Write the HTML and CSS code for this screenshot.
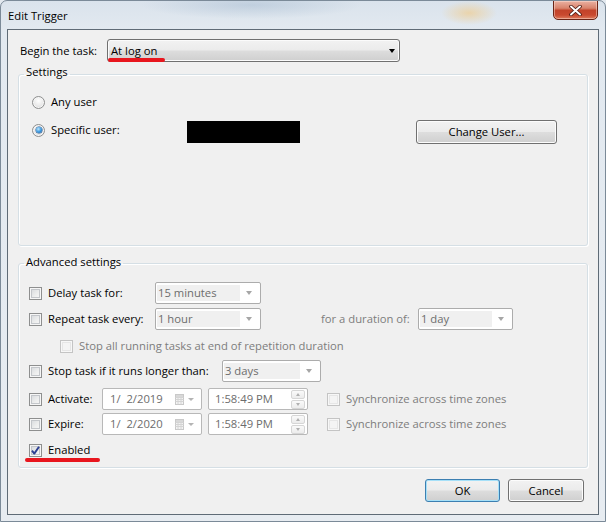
FILE: index.html
```html
<!DOCTYPE html>
<html>
<head>
<meta charset="utf-8">
<title>Edit Trigger</title>
<link rel="stylesheet" href="styles.css">
</head>
<body>
<div class="window">
  <div class="titlebar">
    <span class="title">Edit Trigger</span>
    <button class="close" aria-label="Close">
      <svg width="13" height="11" viewBox="0 0 13 11"><path d="M2 1.5 L11 9.5 M11 1.5 L2 9.5" stroke="#4a1a12" stroke-width="3.6" stroke-linecap="round" fill="none"/><path d="M2 1.5 L11 9.5 M11 1.5 L2 9.5" stroke="#ffffff" stroke-width="1.9" stroke-linecap="round" fill="none"/></svg>
    </button>
  </div>
  <div class="client">
    <div class="begin">
      <span class="begin-label">Begin the task:</span>
      <div class="combo">
        <span class="combo-val">At log on</span>
        <span class="combo-arrow"></span>
        <span class="mark mark-logon"></span>
      </div>
    </div>

    <fieldset class="group group-settings">
      <legend>Settings</legend>
      <div class="set-body">
        <div class="rrow rrow-any">
          <span class="radio"></span>
          <span class="rlabel">Any user</span>
        </div>
        <div class="rrow rrow-spec">
          <span class="radio checked"></span>
          <span class="rlabel spec-label">Specific user:</span>
          <span class="redacted"></span>
          <button class="btn btn-change">Change User...</button>
        </div>
      </div>
    </fieldset>

    <fieldset class="group group-adv">
      <legend>Advanced settings</legend>
      <div class="adv-body">
        <div class="arow r1">
          <span class="cb"></span>
          <span class="lbl w107">Delay task for:</span>
          <div class="dcombo w106"><span class="dval">15 minutes</span><span class="darr"></span></div>
        </div>
        <div class="arow r2">
          <span class="cb"></span>
          <span class="lbl w107">Repeat task every:</span>
          <div class="dcombo w106"><span class="dval">1 hour</span><span class="darr"></span></div>
          <span class="lbl dis dur">for a duration of:</span>
          <div class="dcombo w95"><span class="dval">1 day</span><span class="darr"></span></div>
        </div>
        <div class="arow r3">
          <span class="cb cb-dis indent"></span>
          <span class="lbl dis">Stop all running tasks at end of repetition duration</span>
        </div>
        <div class="arow r4">
          <span class="cb"></span>
          <span class="lbl w174">Stop task if it runs longer than:</span>
          <div class="dcombo w99"><span class="dval">3 days</span><span class="darr"></span></div>
        </div>
        <div class="arow r5">
          <span class="cb"></span>
          <span class="lbl w54">Activate:</span>
          <div class="dbox date">
            <span class="dtext">1/  2/2019</span>
            <svg class="cal" width="9" height="11" viewBox="0 0 9 11"><rect x="0.5" y="0.5" width="8" height="10" fill="#f3f3f3" stroke="#c9c9c9"/><path d="M0.5 3.5 H8.5 M0.5 5.5 H8.5 M0.5 7.5 H8.5 M3 3.5 V10.5 M6 3.5 V10.5" stroke="#d4d4d4" fill="none"/><rect x="1" y="1" width="7" height="2" fill="#d8d8d8"/></svg>
            <span class="tri"></span>
          </div>
          <div class="dbox time">
            <span class="dtext">1:58:49 PM</span>
            <span class="spin"><span class="spin-btn up"></span><span class="spin-btn dn"></span></span>
          </div>
          <span class="cb cb-dis sync"></span>
          <span class="lbl dis">Synchronize across time zones</span>
        </div>
        <div class="arow r6">
          <span class="cb"></span>
          <span class="lbl w54">Expire:</span>
          <div class="dbox date">
            <span class="dtext">1/  2/2020</span>
            <svg class="cal" width="9" height="11" viewBox="0 0 9 11"><rect x="0.5" y="0.5" width="8" height="10" fill="#f3f3f3" stroke="#c9c9c9"/><path d="M0.5 3.5 H8.5 M0.5 5.5 H8.5 M0.5 7.5 H8.5 M3 3.5 V10.5 M6 3.5 V10.5" stroke="#d4d4d4" fill="none"/><rect x="1" y="1" width="7" height="2" fill="#d8d8d8"/></svg>
            <span class="tri"></span>
          </div>
          <div class="dbox time">
            <span class="dtext">1:58:49 PM</span>
            <span class="spin"><span class="spin-btn up"></span><span class="spin-btn dn"></span></span>
          </div>
          <span class="cb cb-dis sync"></span>
          <span class="lbl dis">Synchronize across time zones</span>
        </div>
        <div class="arow r7">
          <span class="cb checked"><svg width="11" height="11" viewBox="0 0 11 11"><path d="M2 5.6 L4.3 8.6 L9 1.8" stroke="#2c3f92" stroke-width="1.9" fill="none" stroke-linejoin="round"/></svg></span>
          <span class="lbl">Enabled</span>
          <span class="mark mark-enabled"></span>
        </div>
      </div>
    </fieldset>

    <div class="actions">
      <button class="btn btn-default">OK</button>
      <button class="btn btn-cancel">Cancel</button>
    </div>
  </div>
</div>
</body>
</html>
```

FILE: styles.css
```css
* { box-sizing: border-box; }

body {
  margin: 0;
  background: #e3e9ef;
  font-family: "Open Sans", "Noto Sans", sans-serif;
  font-size: 11.25px;
  line-height: 16px;
  color: #000;
}

.window {
  width: 606px;
  height: 522px;
  display: flex;
  flex-direction: column;
  border: 1px solid #7b8a98;
  border-radius: 7px 7px 0 0;
  overflow: hidden;
  background:
    radial-gradient(ellipse 28px 12px at 468px 12px, rgba(238, 206, 150, 0.75), rgba(238, 206, 150, 0)),
    radial-gradient(ellipse 110px 14px at 250px 4px, rgba(160, 182, 205, 0.45), rgba(160, 182, 205, 0)),
    radial-gradient(ellipse 60px 12px at 660px 10px, rgba(190, 200, 210, 0.5), rgba(190, 200, 210, 0)),
    linear-gradient(180deg, #dae3ec 0, #e2e9f0 28px, #e7ecf1 100%);
}

/* ---------- title bar ---------- */
.titlebar {
  height: 28px;
  flex: none;
  display: flex;
  justify-content: space-between;
  align-items: flex-start;
  padding: 0 7px 0 7px;
}

.title {
  margin-top: 7px;
  color: #000;
}

.close {
  width: 45px;
  height: 20px;
  margin-top: -1px;
  padding: 0;
  border: 1px solid #6a2416;
  border-radius: 0 0 5px 5px;
  background: linear-gradient(180deg, #eab1a2 0%, #d8836c 40%, #c2432a 52%, #c9492f 78%, #de7c5e 100%);
  box-shadow: inset 0 0 0 1px rgba(255, 230, 220, 0.45);
  display: flex;
  align-items: center;
  justify-content: center;
}

/* ---------- client area ---------- */
.client {
  margin-left: 6px;
  width: 592px;
  height: 486px;
  flex: none;
  border: 1px solid #5f6b76;
  background: #f0f0f0;
  display: flex;
  flex-direction: column;
}

.begin {
  display: flex;
  align-items: center;
  margin-top: 9px;
  padding-left: 12px;
}

.begin-label { width: 87px; }

.combo {
  position: relative;
  width: 293px;
  height: 23px;
  border: 1px solid #707070;
  border-radius: 3px;
  background: linear-gradient(180deg, #f2f2f2 0%, #ebebeb 48%, #dddddd 52%, #cfcfcf 100%);
  box-shadow: inset 0 0 0 1px #fbfbfb;
  display: flex;
  align-items: center;
  padding-left: 3px;
}

.combo-val { flex: 1; }

.combo-arrow {
  width: 0;
  height: 0;
  margin-right: 4px;
  border-left: 3.5px solid transparent;
  border-right: 3.5px solid transparent;
  border-top: 4px solid #000;
}

.mark {
  position: absolute;
  height: 4px;
  background: #e8161e;
  border-radius: 2px;
}

.mark-logon { left: 0; bottom: -1px; width: 57px; }

/* ---------- group boxes ---------- */
.group {
  margin: 0 0 0 10px;
  padding: 0;
  width: 570px;
  min-width: 0;
  border: 1px solid #d5dfe5;
  border-radius: 3px;
  box-shadow: inset 1px 1px 0 #ffffff, 1px 1px 0 #ffffff;
}

.group legend {
  margin-left: 5px;
  padding: 0 2px;
  line-height: 16px;
}

.group-settings {
  margin-top: 2px;
  height: 182px;
}

.group-settings legend { padding-bottom: 5px; }

.set-body { padding: 7px 0 0 13px; }

.rrow {
  display: flex;
  align-items: center;
}

.rrow-any { height: 20px; }

.rrow-spec {
  height: 24px;
  margin-top: 8px;
}

.rrow-spec .radio,
.rrow-spec .rlabel { margin-bottom: 4px; }

.radio {
  width: 13px;
  height: 13px;
  flex: none;
  border-radius: 50%;
  border: 1px solid #8e8f8f;
  background: radial-gradient(circle at 50% 35%, #ffffff 0%, #e9e9e9 55%, #cfcfcf 100%);
  box-shadow: inset 0 0 0 1px #f6f6f6;
  display: flex;
  align-items: center;
  justify-content: center;
}

.radio.checked::after {
  content: "";
  width: 6px;
  height: 6px;
  border-radius: 50%;
  background: radial-gradient(circle at 40% 35%, #bfe6fb 0%, #3f9be0 50%, #15549a 100%);
  box-shadow: 0 0 0 0.5px #1d4f86;
}

.rlabel { margin-left: 6px; }

.spec-label { width: 136px; }

.redacted {
  width: 113px;
  height: 22px;
  background: #000;
  flex: none;
}

.btn {
  font: inherit;
  color: #000;
  padding: 0;
  border: 1px solid #707070;
  border-radius: 3px;
  background: linear-gradient(180deg, #f2f2f2 0%, #ebebeb 48%, #dddddd 52%, #cfcfcf 100%);
  box-shadow: inset 0 0 0 1px #fcfcfc;
  flex: none;
}

.btn-change {
  margin-left: 116px;
  width: 141px;
  height: 24px;
}

/* ---------- advanced ---------- */
.group-adv {
  margin-top: 8px;
  height: 214px;
}

.group-adv legend { padding-bottom: 3px; }

.adv-body { padding: 9px 0 0 10px; }

.arow {
  display: flex;
  align-items: center;
  height: 22px;
}

.r2 { margin-top: 4px; }
.r3 { margin-top: 5px; }
.r4 { margin-top: 3px; }
.r5 { margin-top: 6px; }
.r6 { margin-top: 3px; }
.r7 { margin-top: 4px; position: relative; }

.cb {
  width: 13px;
  height: 13px;
  flex: none;
  border: 1px solid #8e8f8f;
  background: linear-gradient(135deg, #d2d5d9 0%, #eceded 55%, #fafafa 100%);
  box-shadow: inset 0 0 0 1px #f6f6f6, inset 0 0 0 2px #c3c6ca;
  display: flex;
  align-items: center;
  justify-content: center;
}

.cb.cb-dis {
  border-color: #c4c4c4;
  background: #f4f4f4;
  box-shadow: inset 0 0 0 1px #f7f7f7, inset 0 0 0 2px #e6e6e6;
}

.cb.indent { margin-left: 31px; }
.cb.sync { margin-left: 19px; }

.lbl {
  margin-left: 6px;
  white-space: nowrap;
  flex: none;
}

.lbl.dis { color: #7d7d7d; }

.w107 { width: 107px; }
.w174 { width: 174px; }
.w54 { width: 54px; }

.lbl.dur {
  margin-left: 60px;
  width: 97px;
}

.dcombo {
  height: 22px;
  border: 1px solid #acacac;
  border-radius: 2px;
  background: #ffffff;
  padding: 2px 2px 2px 1px;
  display: flex;
  flex: none;
}

.w106 { width: 106px; }
.w95 { width: 95px; }
.w99 { width: 99px; }

.dval {
  flex: 1;
  background: #f0f0f0;
  color: #6d6d6d;
  padding-left: 1px;
  line-height: 16px;
  white-space: nowrap;
}

.darr {
  width: 18px;
  display: flex;
  align-items: center;
  justify-content: center;
}

.darr::after {
  content: "";
  border-left: 3.5px solid transparent;
  border-right: 3.5px solid transparent;
  border-top: 4px solid #a6a6a6;
}

.dbox {
  width: 100px;
  height: 22px;
  flex: none;
  border: 1px solid #b8b8b8;
  border-radius: 2px;
  background: #ffffff;
  display: flex;
  align-items: center;
  color: #6d6d6d;
}

.dbox.date { padding-left: 7px; }

.dbox.time {
  margin-left: 6px;
  padding-left: 6px;
}

.dtext {
  flex: 1;
  white-space: pre;
}

.cal { flex: none; margin-right: 4px; }

.tri {
  width: 0;
  height: 0;
  margin-right: 7px;
  border-left: 3px solid transparent;
  border-right: 3px solid transparent;
  border-top: 3px solid #b4b4b4;
}

.spin {
  width: 14px;
  height: 19px;
  margin-right: 2px;
  display: flex;
  flex-direction: column;
  gap: 1px;
}

.spin-btn {
  flex: 1;
  border: 1px solid #d6d6d6;
  border-radius: 2px;
  background: linear-gradient(180deg, #fafafa, #ececec);
  display: flex;
  align-items: center;
  justify-content: center;
}

.spin-btn.up::after {
  content: "";
  border-left: 2.5px solid transparent;
  border-right: 2.5px solid transparent;
  border-bottom: 3px solid #b0b0b0;
}

.spin-btn.dn::after {
  content: "";
  border-left: 2.5px solid transparent;
  border-right: 2.5px solid transparent;
  border-top: 3px solid #b0b0b0;
}

.mark-enabled {
  left: -4px;
  top: 19px;
  width: 75px;
}

/* ---------- bottom buttons ---------- */
.actions {
  display: flex;
  justify-content: flex-end;
  gap: 8px;
  margin-top: 11px;
  padding-right: 14px;
}

.actions .btn { height: 23px; }

.btn-default {
  width: 75px;
  border-color: #3c7fb1;
  box-shadow: inset 0 0 0 1px #a6e0f8;
}

.btn-cancel { width: 76px; }
```
